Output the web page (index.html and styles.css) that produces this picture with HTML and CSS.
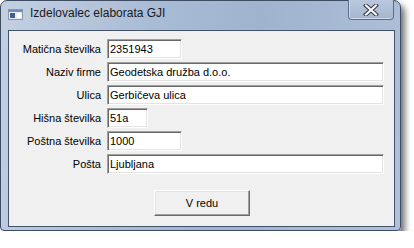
FILE: index.html
```html
<!DOCTYPE html>
<html lang="sl">
<head>
<meta charset="UTF-8" />
<title>Izdelovalec elaborata GJI</title>
<link rel="stylesheet" href="styles.css">
</head>
<body>
<div class="window">
  <div class="titlebar">
    <svg class="app-icon" width="15" height="11" viewBox="0 0 15 11">
      <rect x="0.5" y="0.5" width="14" height="10" fill="#e8eaee" stroke="#8b95a5"/>
      <rect x="1" y="1" width="13" height="2" fill="#6f8fc0"/>
      <rect x="2" y="4" width="5" height="5" fill="#3f5f95"/>
      <rect x="9" y="4" width="4" height="5" fill="#ffffff"/>
    </svg>
    <span class="title">Izdelovalec elaborata GJI</span>
    <div class="close-btn">
      <svg width="16" height="12" viewBox="0 0 16 12">
        <path d="M3 1.5 L13 10.5 M13 1.5 L3 10.5" stroke="#3a4250" stroke-width="4.2" stroke-linecap="square"/>
        <path d="M3 1.5 L13 10.5 M13 1.5 L3 10.5" stroke="#ffffff" stroke-width="2" stroke-linecap="square"/>
      </svg>
    </div>
  </div>
  <div class="client">
    <form class="form">
      <label for="mst">Matična številka</label>
      <input id="mst" class="short" value="2351943">
      <label for="naziv">Naziv firme</label>
      <input id="naziv" class="long" value="Geodetska družba d.o.o.">
      <label for="ulica">Ulica</label>
      <input id="ulica" class="long" value="Gerbičeva ulica">
      <label for="hs">Hišna številka</label>
      <input id="hs" class="tiny" value="51a">
      <label for="pst">Poštna številka</label>
      <input id="pst" class="short" value="1000">
      <label for="posta">Pošta</label>
      <input id="posta" class="long" value="Ljubljana">
    </form>
    <div class="actions">
      <button type="button">V redu</button>
    </div>
  </div>
</div>
</body>
</html>
```
FILE: styles.css
```css
html, body {
  margin: 0; padding: 0;
  background: #ffffff;
}
.window {
  width: 399px;
  height: 229px;
  border: 1px solid #3f4d63;
  border-radius: 7px 7px 4px 4px;
  background: linear-gradient(100deg, #c3d0e2 0%, #a9bcd6 35%, #9fb3cf 60%, #b0c1d9 100%);
  box-shadow: 4px 5px 6px rgba(0,0,0,0.55);
  display: flex;
  flex-direction: column;
}
.titlebar {
  height: 29px;
  display: flex;
  align-items: flex-start;
  position: relative;
}
.app-icon {
  margin: 8px 0 0 7px;
}
.title {
  margin: 5px 0 0 7px;
  font-family: 'Segoe UI', 'Liberation Sans', sans-serif;
  font-size: 12px;
  color: #1a1a1a;
}
.close-btn {
  position: absolute;
  top: -1px;
  right: 6px;
  width: 44px;
  height: 19px;
  border: 1px solid #5c6d88;
  border-top: none;
  border-radius: 0 0 4px 4px;
  background: linear-gradient(#b9c8dc, #a4b6cf);
  box-shadow: inset 0 -1px 0 rgba(255,255,255,0.5), inset 1px 0 0 rgba(255,255,255,0.4);
  display: flex;
  justify-content: center;
  align-items: center;
}
.client {
  margin: 0 5px 3px 7px;
  height: 195px;
  border: 1px solid #44536b;
  background: #f0f0f0;
  font-family: Tahoma, 'Liberation Sans', sans-serif;
  font-size: 11px;
}
.form {
  display: grid;
  grid-template-columns: 92px auto;
  column-gap: 6px;
  row-gap: 3px;
  align-items: center;
  justify-items: start;
  margin: 0;
  padding-top: 8px;
}
.form label {
  justify-self: end;
  color: #000;
}
.form input {
  box-sizing: border-box;
  height: 20px;
  margin: 0;
  padding: 0 2px;
  font-family: Tahoma, 'Liberation Sans', sans-serif;
  font-size: 11px;
  color: #000;
  background: #fff;
  border-style: solid;
  border-width: 1px;
  border-color: #a0a0a0 #ffffff #ffffff #a0a0a0;
  box-shadow: inset 1px 1px 0 #696969, inset -1px -1px 0 #e3e3e3;
  outline: none;
}
.form input.long { width: 277px; }
.form input.short { width: 75px; }
.form input.tiny { width: 41px; }
.actions {
  display: flex;
  justify-content: center;
  margin-top: 16px;
}
button {
  width: 96px;
  height: 26px;
  margin-left: 1px;
  font-family: Tahoma, 'Liberation Sans', sans-serif;
  font-size: 11px;
  color: #000;
  background: #f0f0f0;
  border-style: solid;
  border-width: 1px;
  border-color: #ffffff #696969 #696969 #ffffff;
  box-shadow: inset -1px -1px 0 #a0a0a0, inset 1px 1px 0 #e3e3e3;
  border-radius: 0;
  padding: 0;
}
```
